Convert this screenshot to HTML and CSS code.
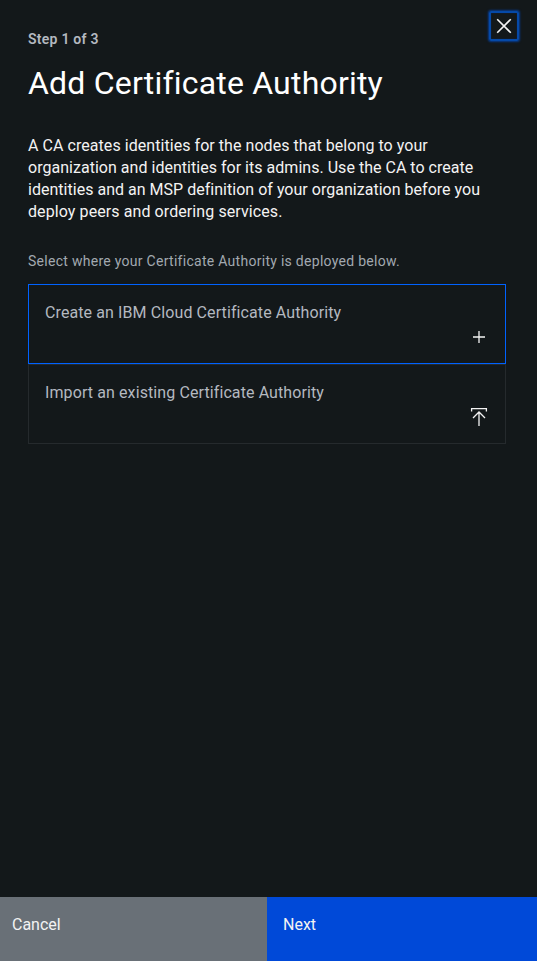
FILE: index.html
```html
<!DOCTYPE html>
<html lang="en">
<head>
<meta charset="utf-8">
<title>Add Certificate Authority</title>
<link rel="stylesheet" href="styles.css">
</head>
<body>
<div class="panel">
  <button class="close" aria-label="Close"><svg width="16" height="16" viewBox="0 0 16 16"><path d="M1.2 1.2 14.8 14.8M14.8 1.2 1.2 14.8"/></svg></button>
  <main class="content">
    <p class="step">Step 1 of 3</p>
    <h1 class="title">Add Certificate Authority</h1>
    <p class="description"><span class="line-a">A CA creates identities for the nodes that belong to your</span><br><span class="line-b">organization and identities for its admins. Use the CA to create</span><br><span class="line-c">identities and an MSP definition of your organization before you</span><br><span class="line-d">deploy peers and ordering services.</span></p>
    <p class="hint">Select where your Certificate Authority is deployed below.</p>
    <div class="tiles">
      <div class="tile selected">
        <span class="label">Create an IBM Cloud Certificate Authority</span>
        <svg class="icon" width="20" height="20" viewBox="0 0 20 20"><path d="M10 4v12M4 10h12"/></svg>
      </div>
      <div class="tile">
        <span class="label">Import an existing Certificate Authority</span>
        <svg class="icon" width="20" height="20" viewBox="0 0 20 20"><path d="M2.6 4.5V1.6h14.8v2.9M10 19V5M4 11l6-6 6 6"/></svg>
      </div>
    </div>
  </main>
  <footer class="actions">
    <button class="cancel">Cancel</button>
    <button class="next">Next</button>
  </footer>
</div>
</body>
</html>
```
FILE: styles.css
```css
* { box-sizing: border-box; }
body { margin: 0; background: #13181a; font-family: Roboto, "Liberation Sans", sans-serif; color: #f3f3f3; }
.panel { position: relative; height: 961px; display: flex; flex-direction: column; overflow: hidden; }
.content { flex: 1; padding: 30px 31px 0 28px; }
p, h1 { margin: 0; white-space: nowrap; }
.step { font-size: 14px; line-height: 18px; font-weight: 600; letter-spacing: .25px; color: #b4b9c0; }
.title { margin-top: 15px; font-size: 32px; line-height: 40px; font-weight: 400; letter-spacing: .2px; color: #fff; }
.description { margin-top: 32px; font-size: 16px; line-height: 22px; }
.line-a { letter-spacing: .055px; }
.line-b { letter-spacing: .025px; }
.line-c { letter-spacing: .02px; }
.line-d { letter-spacing: .09px; }
.hint { margin-top: 29px; font-size: 14px; line-height: 18px; letter-spacing: .28px; color: #a2a9b0; }
.tiles { margin-top: 14px; }
.tile { display: flex; justify-content: space-between; height: 80px; padding: 17px 16px 16px; border: 1px solid #252a2d; font-size: 16px; line-height: 22px; color: #b4b9c0; }
.label { letter-spacing: .1px; }
.tile.selected { border-color: #0062ff; }
.icon { align-self: flex-end; fill: none; stroke: #f3f3f3; stroke-width: 1.3; }
.close { position: absolute; top: 11px; left: 489px; width: 30px; height: 30px; padding: 0; display: grid; place-items: center; border: 2px solid #0549a8; border-radius: 2px; background: transparent; box-shadow: 0 0 2px 1px #073b8c, inset 0 0 1px #073b8c; }
.close svg { fill: none; stroke: #f3f3f3; stroke-width: 1.6; }
.actions { display: grid; grid-template-columns: 267px 1fr; height: 64px; }
.actions button { border: 0; padding: 17px 12px 0; display: flex; align-items: flex-start; font: 16px/22px Roboto, sans-serif; color: #f3f3f3; }
.actions .cancel { background: #697077; }
.actions .next { background: #0049d8; padding-left: 16px; }
```
